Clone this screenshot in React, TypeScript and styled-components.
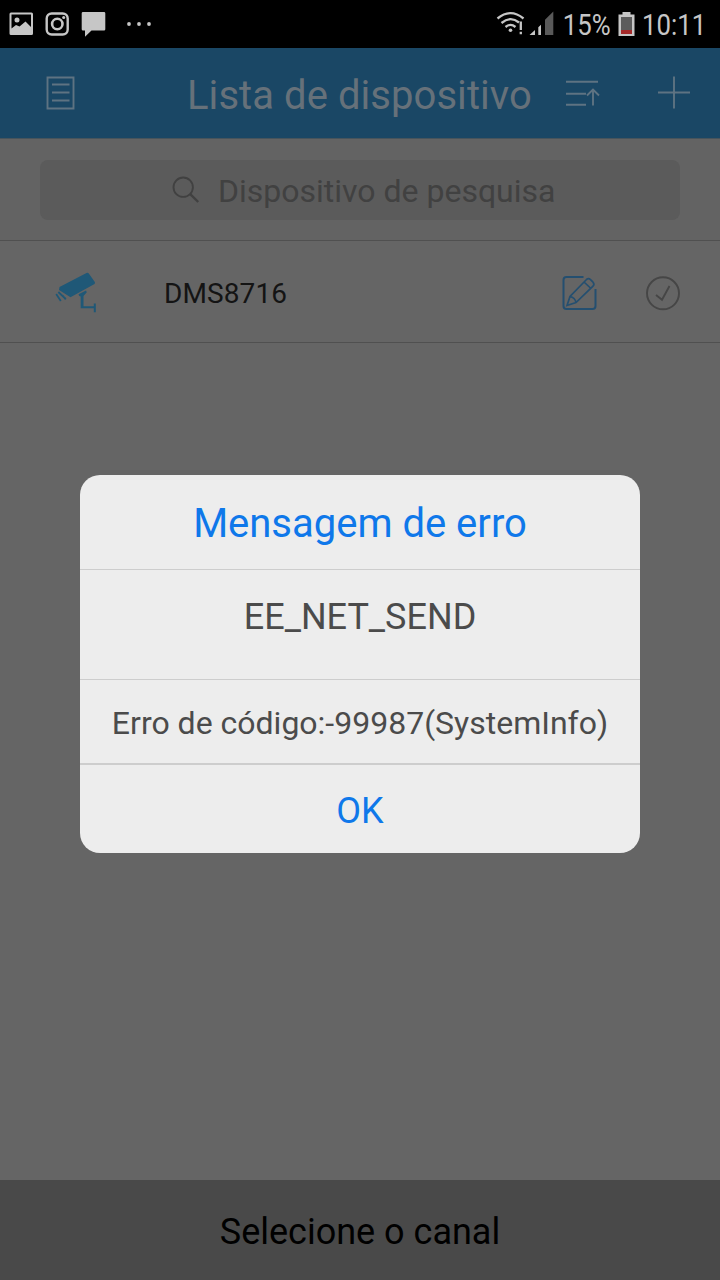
import React from 'react';
import styled, { createGlobalStyle } from 'styled-components';

const GlobalStyle = createGlobalStyle`
  * { box-sizing: border-box; }
  body { margin: 0; background: #656565; font-family: Roboto, "Liberation Sans", sans-serif; }
  svg { display: block; flex: none; }
`;

const Screen = styled.div`
  position: relative;
  width: 720px;
  height: 1280px;
  display: flex;
  flex-direction: column;
  background: #656565;
  overflow: hidden;
`;

const StatusBar = styled.div`
  height: 48px;
  flex: none;
  display: flex;
  justify-content: space-between;
  background: #000;
  color: #c6c6c6;
`;

const StatusGroup = styled.div`
  display: flex;
  align-items: center;
`;

const StatusText = styled.span<{ $width: number; $indent: number }>`
  width: ${(p) => p.$width}px;
  padding: 1px 0 0 ${(p) => p.$indent}px;
  font-size: 30px;
  line-height: 36px;
  white-space: nowrap;
  transform: scaleX(0.86);
  transform-origin: left center;
`;

const Header = styled.header`
  height: 91px;
  flex: none;
  display: flex;
  align-items: center;
  background: #1a4765;
  border-bottom: 1px solid #47545c;
  color: #5e7382;
`;

const HeaderTitle = styled.h1`
  margin: 0 0 0 109px;
  padding-top: 5px;
  width: 371px;
  font-size: 40px;
  line-height: 48px;
  font-weight: 400;
  letter-spacing: 0.06px;
  white-space: nowrap;
  color: #66717a;
`;

const SearchArea = styled.div`
  height: 102px;
  flex: none;
  padding: 21px 40px 0;
  background: #636363;
  border-bottom: 1px solid #505050;
`;

const SearchField = styled.div`
  height: 60px;
  display: flex;
  align-items: center;
  padding-left: 131px;
  gap: 18px;
  border-radius: 8px;
  background: #5b5b5b;
  color: #414141;
`;

const Placeholder = styled.span`
  font-size: 32px;
  line-height: 40px;
  padding-top: 2px;
  white-space: nowrap;
`;

const DeviceRow = styled.div`
  height: 102px;
  flex: none;
  display: flex;
  align-items: center;
  padding: 2px 0 0 54px;
  border-bottom: 1px solid #505050;
`;

const DeviceName = styled.span`
  flex: none;
  width: 397px;
  margin-left: 66px;
  font-size: 28px;
  line-height: 36px;
  padding-top: 2px;
  letter-spacing: 0.1px;
  color: #141414;
`;

const Actions = styled.div`
  display: flex;
  align-items: center;
  gap: 46px;
`;

const Content = styled.main`
  flex: 1;
`;

const ChannelButton = styled.button`
  height: 100px;
  flex: none;
  border: 0;
  padding: 3px 0 0;
  background: #494949;
  color: #000;
  font: 400 36px/44px Roboto, "Liberation Sans", sans-serif;
`;

const Overlay = styled.div`
  position: absolute;
  inset: 0;
  display: flex;
  justify-content: center;
  align-items: flex-start;
  padding-top: 475px;
`;

const Dialog = styled.section`
  width: 560px;
  height: 378px;
  display: flex;
  flex-direction: column;
  overflow: hidden;
  border-radius: 20px;
  background: #ededed;
`;

const DialogRow = styled.div<{ $height: number; $size: number; $top: number; $accent?: boolean; $line?: number }>`
  height: ${(p) => p.$height}px;
  flex: none;
  padding-top: ${(p) => p.$top}px;
  border-bottom: ${(p) => p.$line ?? 0}px solid #cdcdcd;
  font-size: ${(p) => p.$size}px;
  line-height: 48px;
  text-align: center;
  white-space: nowrap;
  color: ${(p) => (p.$accent ? '#0f78ea' : '#4b4b4b')};
`;

const NotificationIcons = () => (
  <svg width="160" height="48" viewBox="0 0 160 48" fill="none">
    <path fillRule="evenodd" fill="#c6c6c6" d="M11 12.500h20.500a1.500 1.500 0 0 1 1.500 1.500v19.500a1.500 1.500 0 0 1-1.500 1.500H11a1.500 1.500 0 0 1-1.500-1.500V14A1.500 1.500 0 0 1 11 12.500zM11.500 14.500v14l4.500-3.500 3.500 1.500 6-5 5.500 5.500V14.500zM17 17.500a2.500 2.500 0 1 1 0 5 2.500 2.500 0 0 1 0-5z" />
    <rect x="46.700" y="13.500" width="21" height="21" rx="5" stroke="#c6c6c6" strokeWidth="2.400" />
    <circle cx="57.300" cy="24" r="5.200" stroke="#c6c6c6" strokeWidth="2.600" />
    <circle cx="63.700" cy="17.600" r="1.500" fill="#c6c6c6" />
    <path fill="#c6c6c6" d="M83 12h21q1.300 0 1.300 1.300v16q0 1.300-1.300 1.300H91.500L85 36.800v-6.200h-2q-1.300 0-1.300-1.300v-16Q81.700 12 83 12z" />
    <circle cx="129" cy="24" r="1.900" fill="#c6c6c6" />
    <circle cx="139" cy="24" r="1.900" fill="#c6c6c6" />
    <circle cx="149" cy="24" r="1.900" fill="#c6c6c6" />
  </svg>
);

const SignalIcons = () => (
  <svg width="66" height="48" viewBox="496 0 66 48" fill="none">
    <g stroke="#c6c6c6" strokeWidth="2.300">
      <path d="M497.500 18.500Q510.500 7.800 523.500 18.500" />
      <path d="M501.500 23Q510.500 15.500 519 22.500" />
      <path d="M505.500 27Q510.500 22.800 515.500 27" />
      <path d="M520.800 21.500v8.500M520.800 31.700v2.600" />
    </g>
    <circle cx="510.500" cy="30.200" r="1.800" fill="#c6c6c6" />
    <path fill="#c6c6c6" d="M529.500 35l5.500-5v5zM538.300 27.200l2.700-2.500V35h-2.700z" />
    <path fill="#595959" d="M545 19.800l8.300-8.300V35H545z" />
  </svg>
);

const BatteryIcon = () => (
  <svg width="18" height="48" viewBox="618 0 18 48">
    <path fill="#c6c6c6" d="M622.500 12h8v2.500h4V36h-16V14.500h4z" />
    <path fill="#5c5c5c" d="M621 17h11v13h-11z" />
    <path fill="#a52a2a" d="M621 30h11v4h-11z" />
  </svg>
);

const ListIcon = () => (
  <svg width="78" height="90" viewBox="0 48 78 90" fill="none" stroke="currentColor" strokeWidth="1.900">
    <path d="M47.500 77.500h26v31h-26zM52 84.500h17.500M52 92.500h17.500M52 100.500h17.500" />
  </svg>
);

const HeaderActions = () => (
  <svg width="162" height="90" viewBox="558 48 162 90" fill="none" stroke="currentColor" strokeWidth="1.900">
    <path d="M566 81.700h32M566 93.700h20M566 104.700h20M593 105.500V90M587 95.500l6-6 6 6M658 92.500h32M674 76.500v32" />
  </svg>
);

const SearchIcon = () => (
  <svg width="29" height="30" viewBox="0 0 29 30" fill="none" stroke="currentColor" strokeWidth="1.900">
    <circle cx="12.200" cy="12.200" r="9.700" />
    <path d="M19.200 19.200l8 7.800" strokeWidth="2.400" />
  </svg>
);

const CameraIcon = () => (
  <svg width="44" height="42" viewBox="54 271 44 42" fill="#1f5877">
    <path d="M86.500 272q1.500-.6 2.500.8l5.800 8.200q.8 1.500-.7 2.300L70.500 296.200 59 289l.500-3z" />
    <path d="M56.200 293l4.600 7M58.300 291l7.500 7M62.700 294.500l3 4" stroke="#1f5877" strokeWidth="1.800" />
    <path d="M78.500 293.200l7.500-3.700.8 1.800-3.300 3.700v10.200h10.300v-2.700h2v8.700h-2v-4H80.700v-11.800l-1.500-.5z" />
  </svg>
);

const EditIcon = () => (
  <svg width="38" height="38" viewBox="561 273 38 38" fill="none" stroke="#244f70" strokeWidth="2">
    <path d="M583.500 276h-17q-3 0-3 3v26q0 3 3 3h26q3 0 3-3V288" />
    <path d="M567 304.500l3-9 16.500-17q2-1.700 4 .2l2.500 2.500q1.800 2 0 4L576 301.500zM570 295.500q5 1 6 6M584 281l7 6.500" strokeWidth="1.700" />
  </svg>
);

const SelectIcon = () => (
  <svg width="36" height="38" viewBox="645 273 36 38" fill="none" stroke="#464646" strokeWidth="1.900">
    <circle cx="663" cy="292.300" r="16" />
    <path d="M656 294l6 4.800 7.500-13.800" />
  </svg>
);

export default function App() {
  return (
    <Screen>
      <GlobalStyle />
      <StatusBar>
        <StatusGroup><NotificationIcons /></StatusGroup>
        <StatusGroup>
          <SignalIcons />
          <StatusText $width={56} $indent={1}>15%</StatusText>
          <BatteryIcon />
          <StatusText $width={84} $indent={7}>10:11</StatusText>
        </StatusGroup>
      </StatusBar>
      <Header>
        <ListIcon />
        <HeaderTitle>Lista de dispositivo</HeaderTitle>
        <HeaderActions />
      </Header>
      <SearchArea>
        <SearchField>
          <SearchIcon />
          <Placeholder>Dispositivo de pesquisa</Placeholder>
        </SearchField>
      </SearchArea>
      <DeviceRow>
        <CameraIcon />
        <DeviceName>DMS8716</DeviceName>
        <Actions>
          <EditIcon />
          <SelectIcon />
        </Actions>
      </DeviceRow>
      <Content />
      <ChannelButton>Selecione o canal</ChannelButton>
      <Overlay>
        <Dialog role="dialog">
          <DialogRow $height={95} $size={40} $top={25} $line={1} $accent>Mensagem de erro</DialogRow>
          <DialogRow $height={110} $size={36} $top={23} $line={1}>EE_NET_SEND</DialogRow>
          <DialogRow $height={85} $size={32} $top={19} $line={2}>Erro de código:-99987(SystemInfo)</DialogRow>
          <DialogRow $height={88} $size={36} $top={22} $accent>OK</DialogRow>
        </Dialog>
      </Overlay>
    </Screen>
  );
}
